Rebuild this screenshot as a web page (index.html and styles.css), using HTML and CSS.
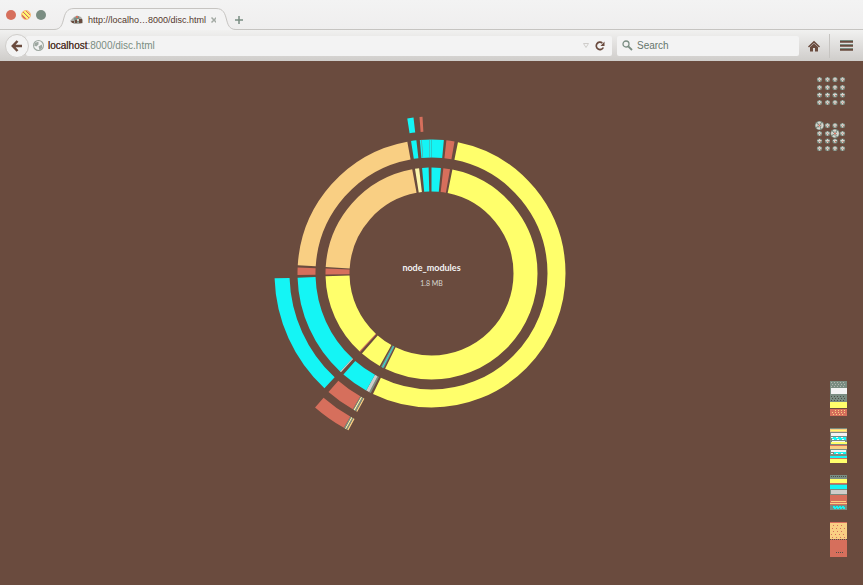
FILE: index.html
```html
<!DOCTYPE html>
<html lang="en">
<head>
<meta charset="utf-8">
<title>disc</title>
<link rel="stylesheet" href="styles.css">
</head>
<body>
<header class="browser">
  <div class="tabstrip">
    <div class="lights"><i class="light close"></i><i class="light minimize"></i><i class="light expand"></i></div>
    <div class="tab">
      <svg class="edge" viewBox="0 0 20 23" aria-hidden="true"><path d="M0 22.500C14 22.500 5 1.500 20 1.500V23H0Z" fill="#f3f3f3"/><path d="M0 22.500C14 22.500 5 1.500 20 1.500" fill="none" stroke="#c6c4c1"/></svg>
      <div class="tab-body">
        <svg class="favicon" viewBox="0 0 14 12" aria-hidden="true"><path d="M0 7L2 5L4 3L7 1.500L11 3L13 6V9L10 10H4Z" fill="#a9aba6"/><path d="M4 4L9 2L10 8L5 9Z" fill="#7a8d82"/><path d="M9 5h3v4H9z" fill="#6a4b3e"/><path d="M1 7h3v2H2zM5 6h2v3H5z" fill="#6a4b3e"/><path d="M6 2h2v2H6z" fill="#d66f5c"/><path d="M7 5h2v2H7z" fill="#d8d6d0"/></svg>
        <span class="tab-title">http://localho…8000/disc.html</span>
        <button class="tab-close" aria-label="Close tab"><svg viewBox="0 0 8 8"><path d="M1.500 1.500L6.500 6.500M6.500 1.500L1.500 6.500" stroke="#a3aaa4" stroke-width="1.500"/></svg></button>
      </div>
      <svg class="edge" viewBox="0 0 20 23" aria-hidden="true"><path d="M0 1.500C15 1.500 6 22.500 20 22.500V23H0Z" fill="#f3f3f3"/><path d="M0 1.500C15 1.500 6 22.500 20 22.500" fill="none" stroke="#c6c4c1"/></svg>
    </div>
    <button class="new-tab" aria-label="New tab"><svg viewBox="0 0 8 8"><path d="M4 0V8M0 4H8" stroke="#7a8d82" stroke-width="1.500"/></svg></button>
  </div>
  <div class="toolbar">
    <button class="back" aria-label="Back"><svg viewBox="0 0 12 12"><path d="M6.500 1L1.800 6L6.500 11M2 6H11" fill="none" stroke="#6a4b3e" stroke-width="2.500"/></svg></button>
    <div class="field address">
      <svg class="globe" viewBox="0 0 10 10" aria-hidden="true"><circle cx="5" cy="5" r="4.500" fill="#f3f3f3" stroke="#9ea8a1"/><path d="M2 2.500L5 1.500L5 4L3 6L1 5ZM5 6L8 4L8.500 7L6 9Z" fill="#9ea8a1"/></svg>
      <a class="url" href="#"><b>localhost</b>:8000/disc.html</a>
      <button class="drop" aria-label="History"><svg viewBox="0 0 6 5"><path d="M.5 .5H5.500L3 4.500Z" fill="none" stroke="#cfcdca"/></svg></button>
      <button class="reload" aria-label="Reload"><svg viewBox="0 0 10 10"><path d="M8.300 6.500A3.700 3.700 0 1 1 7.300 2" fill="none" stroke="#6a4b3e" stroke-width="1.700"/><path d="M9.500 .5V5H5.500Z" fill="#6a4b3e"/></svg></button>
    </div>
    <div class="field search">
      <svg class="glass" viewBox="0 0 11 11" aria-hidden="true"><circle cx="4" cy="4" r="3" fill="none" stroke="#7a8d82" stroke-width="1.300"/><path d="M6.300 6.300L10 10" stroke="#7a8d82" stroke-width="1.800"/></svg>
      <input type="text" placeholder="Search" aria-label="Search">
    </div>
    <button class="home" aria-label="Home"><svg viewBox="0 0 12 12"><path d="M0 6.500L6 .8L12 6.500L11 7.500L6 3L1 7.500Z" fill="#6a4b3e"/><path d="M2 7L6 3.500L10 7V11.500H7V8H5V11.500H2Z" fill="#6a4b3e"/></svg></button>
    <button class="menu" aria-label="Menu"><svg viewBox="0 0 13 11"><path d="M0 .5H13M0 4.500H13M0 8.500H13" stroke="#7a8d82"/><path d="M0 1.800H13M0 5.800H13M0 9.800H13" stroke="#6a4b3e" stroke-width="1.800"/></svg></button>
  </div>
</header>
<main class="stage">
  <svg class="disc" viewBox="-179.500 -179.500 360 360" role="img" aria-label="Module sizes">
    <g class="ring ring1">
      <circle class="yellow" pathLength="360" r="94" stroke-dasharray="194.600 360" stroke-dashoffset="-11.400"/>
      <circle class="moss" pathLength="360" r="94" stroke-dasharray="1.700 360" stroke-dashoffset="-206.800"/>
      <circle class="cyan thin" pathLength="360" r="94" stroke-dasharray="0.400 360" stroke-dashoffset="-207.400"/>
      <circle class="yellow" pathLength="360" r="94" stroke-dasharray="11.700 360" stroke-dashoffset="-209.300"/>
      <circle class="red" pathLength="360" r="94" stroke-dasharray="0.600 360" stroke-dashoffset="-222.300"/>
      <circle class="yellow" pathLength="360" r="94" stroke-dasharray="45.700 360" stroke-dashoffset="-222.800"/>
      <circle class="red" pathLength="360" r="94" stroke-dasharray="3.400 360" stroke-dashoffset="-269.400"/>
      <circle class="tan" pathLength="360" r="94" stroke-dasharray="75.900 360" stroke-dashoffset="-273.600"/>
      <circle class="cream" pathLength="360" r="94" stroke-dasharray="2.200 360" stroke-dashoffset="-351"/>
      <circle class="cyan" pathLength="360" r="94" stroke-dasharray="3.600 360" stroke-dashoffset="-354.800"/>
      <circle class="cyan" pathLength="360" r="94" stroke-dasharray="5.200 360" stroke-dashoffset="0"/>
      <circle class="red" pathLength="360" r="94" stroke-dasharray="3.600 360" stroke-dashoffset="-6.500"/>
    </g>
    <g class="ring ring2">
      <circle class="yellow" pathLength="360" r="125" stroke-dasharray="194.500 360" stroke-dashoffset="-11.400"/>
      <circle class="moss" pathLength="360" r="125" stroke-dasharray="0.800 360" stroke-dashoffset="-206.900"/>
      <circle class="silver" pathLength="360" r="125" stroke-dasharray="1.500 360" stroke-dashoffset="-207.700"/>
      <circle class="cyan" pathLength="360" r="125" stroke-dasharray="11.900 360" stroke-dashoffset="-209.200"/>
      <circle class="silver" pathLength="360" r="125" stroke-dasharray="0.600 360" stroke-dashoffset="-222.500"/>
      <circle class="cyan" pathLength="360" r="125" stroke-dasharray="45.200 360" stroke-dashoffset="-223"/>
      <circle class="red" pathLength="360" r="125" stroke-dasharray="3.200 360" stroke-dashoffset="-269.400"/>
      <circle class="tan" pathLength="360" r="125" stroke-dasharray="76 360" stroke-dashoffset="-273.600"/>
      <circle class="cyan" pathLength="360" r="125" stroke-dasharray="2.300 360" stroke-dashoffset="-351.200"/>
      <circle class="cyan" pathLength="360" r="125" stroke-dasharray="5.100 360" stroke-dashoffset="-355"/>
      <circle class="cyan" pathLength="360" r="125" stroke-dasharray="5.300 360" stroke-dashoffset="0"/>
      <circle class="moss" pathLength="360" r="125" stroke-dasharray="0.250 360" stroke-dashoffset="-355.600"/>
      <circle class="moss" pathLength="360" r="125" stroke-dasharray="0.200 360" stroke-dashoffset="-359"/>
      <circle class="red" pathLength="360" r="125" stroke-dasharray="3.500 360" stroke-dashoffset="-6.400"/>
    </g>
    <g class="ring ring3">
      <circle class="tan" pathLength="360" r="149.500" stroke-dasharray="0.500 360" stroke-dashoffset="-208.200"/>
      <circle class="moss" pathLength="360" r="149.500" stroke-dasharray="0.600 360" stroke-dashoffset="-208.700"/>
      <circle class="cream" pathLength="360" r="149.500" stroke-dasharray="0.500 360" stroke-dashoffset="-209.300"/>
      <circle class="moss" pathLength="360" r="149.500" stroke-dasharray="0.300 360" stroke-dashoffset="-209.800"/>
      <circle class="red" pathLength="360" r="149.500" stroke-dasharray="10.900 360" stroke-dashoffset="-210.100"/>
      <circle class="cyan" pathLength="360" r="149.500" stroke-dasharray="45.200 360" stroke-dashoffset="-223"/>
      <circle class="cyan" pathLength="360" r="149.500" stroke-dasharray="2.300 360" stroke-dashoffset="-351.100"/>
      <circle class="red" pathLength="360" r="149.500" stroke-dasharray="1.100 360" stroke-dashoffset="-355.600"/>
    </g>
    <g class="ring ring4">
      <circle class="tan" pathLength="360" r="171" stroke-dasharray="0.500 360" stroke-dashoffset="-207.900"/>
      <circle class="moss" pathLength="360" r="171" stroke-dasharray="0.400 360" stroke-dashoffset="-208.400"/>
      <circle class="cream" pathLength="360" r="171" stroke-dasharray="0.400 360" stroke-dashoffset="-208.800"/>
      <circle class="moss" pathLength="360" r="171" stroke-dasharray="0.400 360" stroke-dashoffset="-209.200"/>
      <circle class="red" pathLength="360" r="171" stroke-dasharray="11.400 360" stroke-dashoffset="-209.600"/>
    </g>
    <text class="name" x="0" y="-3">node_modules</text>
    <text class="size" x="0" y="12">1.8 MB</text>
  </svg>
  <aside class="side">
    <svg class="dots" viewBox="0 0 32 76" aria-hidden="true">
      <defs>
        <g id="mini"><circle r="2.600" fill="#7a8d82"/><circle r="1.200" fill="#d8d6d0"/><path d="M-2 -.5H2M0-2V2" stroke="#d8d6d0"/><path d="M0 0L1 1" stroke="#d66f5c"/></g>
        <g id="large"><circle r="4.600" fill="#7a8d82"/><circle r="3" fill="none" stroke="#d8d6d0" stroke-width="1.800" stroke-dasharray="3 1"/><path d="M-2 0H2M0-2V2" stroke="#d8d6d0"/><circle r="1" fill="#d66f5c"/></g>
        <g id="dotrow"><use href="#mini" x="4.500"/><use href="#mini" x="12.500"/><use href="#mini" x="20"/><use href="#mini" x="27.500"/></g>
      </defs>
      <use href="#dotrow" y="4.500"/><use href="#dotrow" y="12.500"/><use href="#dotrow" y="20"/><use href="#dotrow" y="27.500"/>
      <use href="#dotrow" y="50.500"/><use href="#dotrow" y="58.500"/><use href="#dotrow" y="66"/><use href="#dotrow" y="73.500"/>
      <use href="#large" x="4.500" y="50.500"/><use href="#large" x="20" y="58.500"/>
    </svg>
    <div class="palettes">
      <svg class="palette" viewBox="0 0 17 35" shape-rendering="crispEdges" aria-hidden="true">
        <path fill="#7a8d82" d="M0 0h17v35H0z"/><path stroke="#b2b7af" stroke-dasharray="1 2" d="M1 1.500h15M2 3.500h14M1 5.500h15"/>
        <path fill="#f3f3f3" d="M1 7h16v6H1z"/><path stroke="#4e5049" stroke-dasharray="1 2" d="M1 15.500h15M2 17.500h14M1 19.500h15"/>
        <path fill="#ffff6b" d="M0 21h17v6H0z"/><path fill="#6a4b3e" d="M0 27h17v1H0z"/><path fill="#d66f5c" d="M0 28h17v7H0z"/><path stroke="#f9cf83" stroke-dasharray="1 2" d="M5 29.500h11M2 31.500h14M3 33.500h12"/>
      </svg>
      <svg class="palette" viewBox="0 0 17 35" shape-rendering="crispEdges" aria-hidden="true">
        <path fill="#7a8d82" d="M0 0h17v35H0z"/><path fill="#f9cf83" d="M0 1h17v3H0zM0 18h17v3H0z"/><path fill="#ffff6b" d="M1 2h15v1H1zM1 14h16v2H1zM0 31h17v4H0z"/>
        <path fill="#f3f3f3" d="M1 5h16v3H1zM2 13h13v1H2zM1 22h15v2H1z"/><path fill="#14f5f5" d="M2 9h14v3H2zM4 24h12v2H4zM0 28h17v2H0z"/><path fill="#d66f5c" d="M0 17h17v1H0zM0 30h17v1H0z"/><path stroke="#f3f3f3" stroke-dasharray="2 3" d="M1 9.500h15M2 11.500h14M1 25.500h15"/>
      </svg>
      <svg class="palette" viewBox="0 0 17 35" shape-rendering="crispEdges" aria-hidden="true">
        <path fill="#7a8d82" d="M0 0h17v35H0z"/><path stroke="#4e5049" stroke-dasharray="1 1" d="M1 1.500h15"/><path fill="#ffff6b" d="M0 4h17v4H0z"/><path fill="#d66f5c" d="M0 8h17v1H0zM0 20h17v10H0z"/>
        <path fill="#14f5f5" d="M0 10h17v4H0zM3 31h12v3H3z"/><path fill="#cfcdca" d="M1 15h16v4H1z"/><path fill="#f9cf83" d="M1 26h15v1H1zM0 28h17v1H0z"/><path stroke="#7a8d82" stroke-dasharray="1 2" d="M2 31.500h14M3 33.500h12"/>
      </svg>
      <svg class="palette" viewBox="0 0 17 35" shape-rendering="crispEdges" aria-hidden="true">
        <path fill="#d66f5c" d="M0 0h17v35H0z"/><path fill="#f9cf83" d="M0 1h17v16H0z"/><path stroke="#d66f5c" stroke-dasharray="1 3" d="M3 3.500h12M2 6.500h13M3 9.500h12M1 12.500h15M2 15.500h14"/><path stroke="#4e5049" stroke-dasharray="1 1" d="M0 17.500h17M6 30.500h7"/>
      </svg>
    </div>
  </aside>
</main>
</body>
</html>
```
FILE: styles.css
```css
* { box-sizing: border-box; }
body {
  margin: 0;
  min-height: 100vh;
  display: flex;
  flex-direction: column;
  background: #6a4b3e;
  font-family: "Liberation Sans", Arial, sans-serif;
}
svg { display: block; }
button {
  padding: 0;
  border: 0;
  background: none;
  display: grid;
  place-items: center;
}

/* Tab strip */
.tabstrip {
  display: flex;
  align-items: flex-end;
  height: 30px;
  background: linear-gradient(#f3f3f3, #efeeee);
  box-shadow: inset 0 -1px #c6c4c1;
}
.lights {
  display: flex;
  gap: 5px;
  width: 54px;
  padding: 0 0 10px 6px;
}
.light {
  width: 10px;
  height: 10px;
  border-radius: 50%;
}
.close { background: #d66f5c; }
.minimize {
  background: repeating-linear-gradient(45deg, #f9cf83 0 1px, #ffff6b 1px 2px, #d66f5c 2px 3px);
  border: 1px solid #f9b873;
}
.expand { background: #7a8d82; }
.tab { display: flex; height: 23px; }
.edge { width: 20px; height: 23px; }
.tab-body {
  display: flex;
  align-items: center;
  width: 142px;
  border-top: 1px solid #c6c4c1;
  margin-top: 1px;
  background: #f3f3f3;
}
.favicon { width: 14px; height: 12px; margin-left: -4px; }
.tab-title {
  flex: 1;
  margin-left: 4px;
  font-size: 9px;
  line-height: 12px;
  white-space: nowrap;
  color: #53382d;
}
.tab-close { margin-right: -2px; }
.tab-close svg { width: 8px; height: 8px; }
.new-tab { width: 8px; height: 20px; margin-left: -1px; }
.new-tab svg { width: 8px; height: 8px; }

/* Toolbar */
.toolbar {
  display: flex;
  align-items: center;
  height: 31px;
  background: linear-gradient(#f1f1f0, #d6d4d2 80%, #cfcdca);
}
.back {
  flex: none;
  width: 24px;
  height: 24px;
  margin-left: 5px;
  border: 1px solid #cfcdca;
  border-radius: 50%;
  background: #f3f3f3;
  z-index: 1;
}
.back svg { width: 12px; height: 12px; }
.field {
  display: flex;
  align-items: center;
  height: 20px;
  background: #f3f3f3;
  border-radius: 2px;
}
.address {
  flex: 1;
  margin-left: -3px;
  padding: 0 7px;
}
.globe { width: 11px; height: 11px; }
.url {
  flex: 1;
  margin-left: 4px;
  font-size: 10px;
  color: #7a8d82;
  text-decoration: none;
}
.url b { font-weight: 400; color: #53382d; text-shadow: 0 0 #53382d; }
.drop svg { width: 6px; height: 5px; }
.reload { margin-left: 6px; }
.reload svg { width: 10px; height: 10px; }
.search {
  width: 182px;
  margin-left: 5px;
  padding: 0 5px;
}
.glass { flex: none; width: 11px; height: 11px; }
.search input {
  flex: 1;
  min-width: 0;
  margin-left: 4px;
  padding: 0;
  border: 0;
  outline: 0;
  background: none;
  font: 10px "Liberation Sans", Arial, sans-serif;
}
.search input::placeholder { color: #66756c; opacity: 1; }
.home { width: 30px; height: 24px; }
.home svg { width: 12px; height: 12px; }
.menu {
  width: 34px;
  height: 24px;
  border-left: 1px solid #c6c4c1;
}
.menu svg { width: 13px; height: 11px; }

/* Disc */
.stage {
  flex: 1;
  display: grid;
  grid-template-columns: 1fr 360px 1fr;
}
.disc {
  grid-column: 2;
  width: 360px;
  height: 360px;
  margin-top: 33px;
}
.ring { transform: rotate(-90deg); fill: none; }
.ring1 { stroke-width: 24px; }
.ring2 { stroke-width: 18px; }
.ring3 { stroke-width: 15px; }
.ring4 { stroke-width: 13px; }
.yellow { stroke: #ffff6b; }
.cyan { stroke: #14f5f5; }
.tan { stroke: #f9cf83; }
.red { stroke: #d66f5c; }
.moss { stroke: #7a8d82; }
.silver { stroke: #cfcdca; }
.cream { stroke: #fbf6ac; }
.name, .size {
  fill: #f3f3f3;
  font-family: Lato, "Open Sans", sans-serif;
  text-anchor: middle;
}
.name { font-size: 9px; font-weight: 700; }
.size { font-size: 7px; fill: #d8d6d0; }

/* Thumbnails */
.side {
  display: flex;
  flex-direction: column;
  justify-content: space-between;
  align-items: flex-end;
  padding: 14px 16px 28px 0;
}
.dots { width: 32px; height: 76px; overflow: visible; }
.palettes { display: grid; gap: 12px; }
.palette { width: 17px; height: 35px; }
```
